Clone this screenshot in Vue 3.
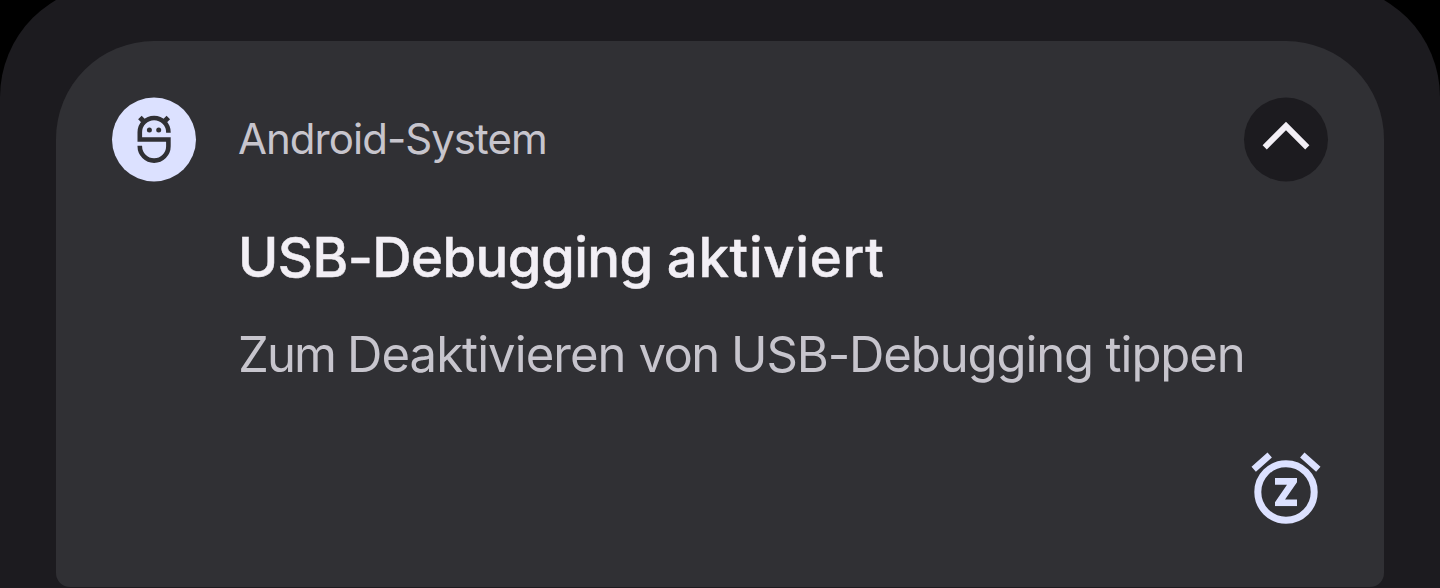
<script setup>
const title = [
  { text: 'USB-Debugging ', spacing: -0.57 },
  { text: 'aktiviert', spacing: 0.72 },
]
const body = [
  { text: 'Zum ', spacing: -1.85 },
  { text: 'Deaktivieren ', spacing: -0.95 },
  { text: 'von ', spacing: -1.5 },
  { text: 'USB-Debugging ', spacing: -1.12 },
  { text: 'tippen', spacing: -1.05 },
]
</script>

<template>
  <main class="shade">
    <div class="panel">
      <article class="card">
        <header class="head">
          <svg class="badge" viewBox="0 -0.5 84 84">
            <circle cx="42" cy="42" r="42" fill="#dce1ff" />
            <g fill="none" stroke="#303034" stroke-width="4.6">
              <path d="M56.4 35.3V34.8A14.3 14.3 0 0 0 27.8 34.8V42H56.4V48.8A14.3 14.3 0 0 1 27.8 48.8V48.3" />
              <path d="M27.9 20.1L32.4 24.6M56.3 20.1L51.8 24.6" stroke-width="5" />
            </g>
            <circle cx="37.4" cy="32.4" r="2.5" fill="#303034" />
            <circle cx="46.7" cy="32.4" r="2.5" fill="#303034" />
          </svg>
          <span class="app">Android-System</span>
          <svg class="toggle" viewBox="0 -0.5 84 84">
            <circle cx="42" cy="42" r="42" fill="#1c1b1f" />
            <path d="M42 24.3L18.6 47.8L22.8 52L42 32.8L61.2 52L65.4 47.8Z" fill="#f2eff5" />
          </svg>
        </header>
        <h1 class="title"><span v-for="w in title" :key="w.text" :style="{ letterSpacing: w.spacing + 'px' }">{{ w.text }}</span></h1>
        <p class="body"><span v-for="w in body" :key="w.text" :style="{ letterSpacing: w.spacing + 'px' }">{{ w.text }}</span></p>
        <footer class="actions">
          <svg class="snooze" viewBox="0 0 84 84" fill="none" stroke="#dce1ff">
            <circle cx="42" cy="42" r="28.2" stroke-width="7" />
            <path d="M9.7 19.2L25.7 5M74.3 19.2L58.3 5" stroke-width="6.6" />
            <svg x="31" y="28" width="22" height="28.3" viewBox="0 0 22 28.3">
              <path d="M0 3.4H18.4L3.6 24.9H22" stroke-width="6.8" />
            </svg>
          </svg>
        </footer>
      </article>
    </div>
  </main>
</template>

<style>
body {
  background: #000;
}
</style>

<style scoped>
.shade {
  height: 588px;
  overflow: hidden;
  background: #000;
  font-family: Inter, "Open Sans", sans-serif;
}
.panel {
  box-sizing: border-box;
  height: 640px;
  margin-top: -15px;
  padding: 56px 56px 0;
  border-radius: 112px 112px 0 0;
  background: #1c1b1f;
}
.card {
  box-sizing: border-box;
  height: 546px;
  padding: 56px 56px 0;
  border-radius: 98px 98px 14px 14px;
  background: #303034;
}
.head {
  display: flex;
  align-items: center;
  height: 84px;
}
.badge,
.toggle,
.snooze {
  flex: none;
  width: 84px;
  height: 84px;
  overflow: visible;
}
.app {
  flex: 1;
  margin-left: 42px;
  font-size: 42px;
  line-height: 60px;
  letter-spacing: -0.97px;
  color: #c7c5cd;
  white-space: nowrap;
}
.title,
.body {
  margin: 0 0 0 126px;
  white-space: pre;
}
.title {
  margin-top: 41px;
  font-size: 54.5px;
  font-weight: 500;
  line-height: 70px;
  color: #f2eff5;
  -webkit-text-stroke: 0.5px #f2eff5;
}
.body {
  margin-top: 31px;
  font-size: 49px;
  line-height: 64px;
  color: #c7c5cd;
}
.actions {
  display: flex;
  justify-content: flex-end;
  margin-top: 63px;
}
</style>
